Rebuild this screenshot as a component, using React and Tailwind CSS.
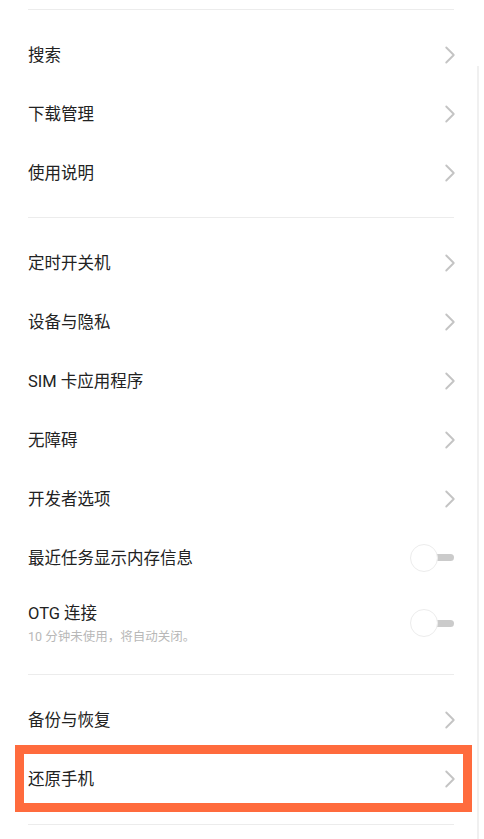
import { ChevronRight } from "lucide-react";

const font = { fontFamily: "Roboto, 'Noto Sans CJK SC', sans-serif" };

// one settings row: title, optional subtitle, chevron or switch
function Row({ title, sub, kind = "arrow", highlight = false }) {
  return (
    <div
      className={`relative flex items-center justify-between pl-7 pr-[30px] ${
        sub ? "h-[72px]" : "h-[59px]"
      }`}
    >
      <div className="flex flex-col pt-[3px]">
        <span className="text-[16.5px] leading-6 text-[#222]">{title}</span>
        {sub && (
          <span className="mt-[1px] text-[12.5px] leading-5 text-[#b8b8b8]">
            {sub}
          </span>
        )}
      </div>
      {kind === "arrow" ? (
        <ChevronRight
          size={30}
          strokeWidth={1.5}
          className="-mr-[11px] mt-[1px] text-[#c4c4c4]"
        />
      ) : (
        <Toggle />
      )}
      {highlight && (
        <div className="absolute -top-[4px] -bottom-[4px] left-[15px] right-[12px] border-[9px] border-[#ff6b3d] pointer-events-none" />
      )}
    </div>
  );
}

function Toggle() {
  return (
    <div className="relative flex h-[28px] w-[44px] items-center">
      <div className="absolute right-0 h-[7px] w-[22px] rounded-full bg-[#cbcbcb]" />
      <div className="relative h-[28px] w-[28px] rounded-full border border-[#ececec] bg-white" />
    </div>
  );
}

function Divider() {
  return <div className="ml-7 mr-[30px] h-px bg-[#ececec]" />;
}

function Group({ children, last }) {
  return <div className={`pt-[15px] ${last ? "pb-[16px]" : "pb-[15px]"}`}>{children}</div>;
}

export default function App() {
  return (
    <div className="relative min-h-[839px] w-[484px] overflow-hidden bg-white" style={font}>
      <div className="absolute right-[5px] top-[66px] bottom-0 w-[2px] bg-[#f0f0f0]" />
      <div className="pt-[9px]">
        <Divider />
        <Group>
          <Row title="搜索" />
          <Row title="下载管理" />
          <Row title="使用说明" />
        </Group>
        <Divider />
        <Group>
          <Row title="定时开关机" />
          <Row title="设备与隐私" />
          <Row title="SIM 卡应用程序" />
          <Row title="无障碍" />
          <Row title="开发者选项" />
          <Row title="最近任务显示内存信息" kind="toggle" />
          <Row title="OTG 连接" sub="10 分钟未使用，将自动关闭。" kind="toggle" />
        </Group>
        <Divider />
        <Group last>
          <Row title="备份与恢复" />
          <Row title="还原手机" highlight />
        </Group>
        <Divider />
      </div>
    </div>
  );
}
